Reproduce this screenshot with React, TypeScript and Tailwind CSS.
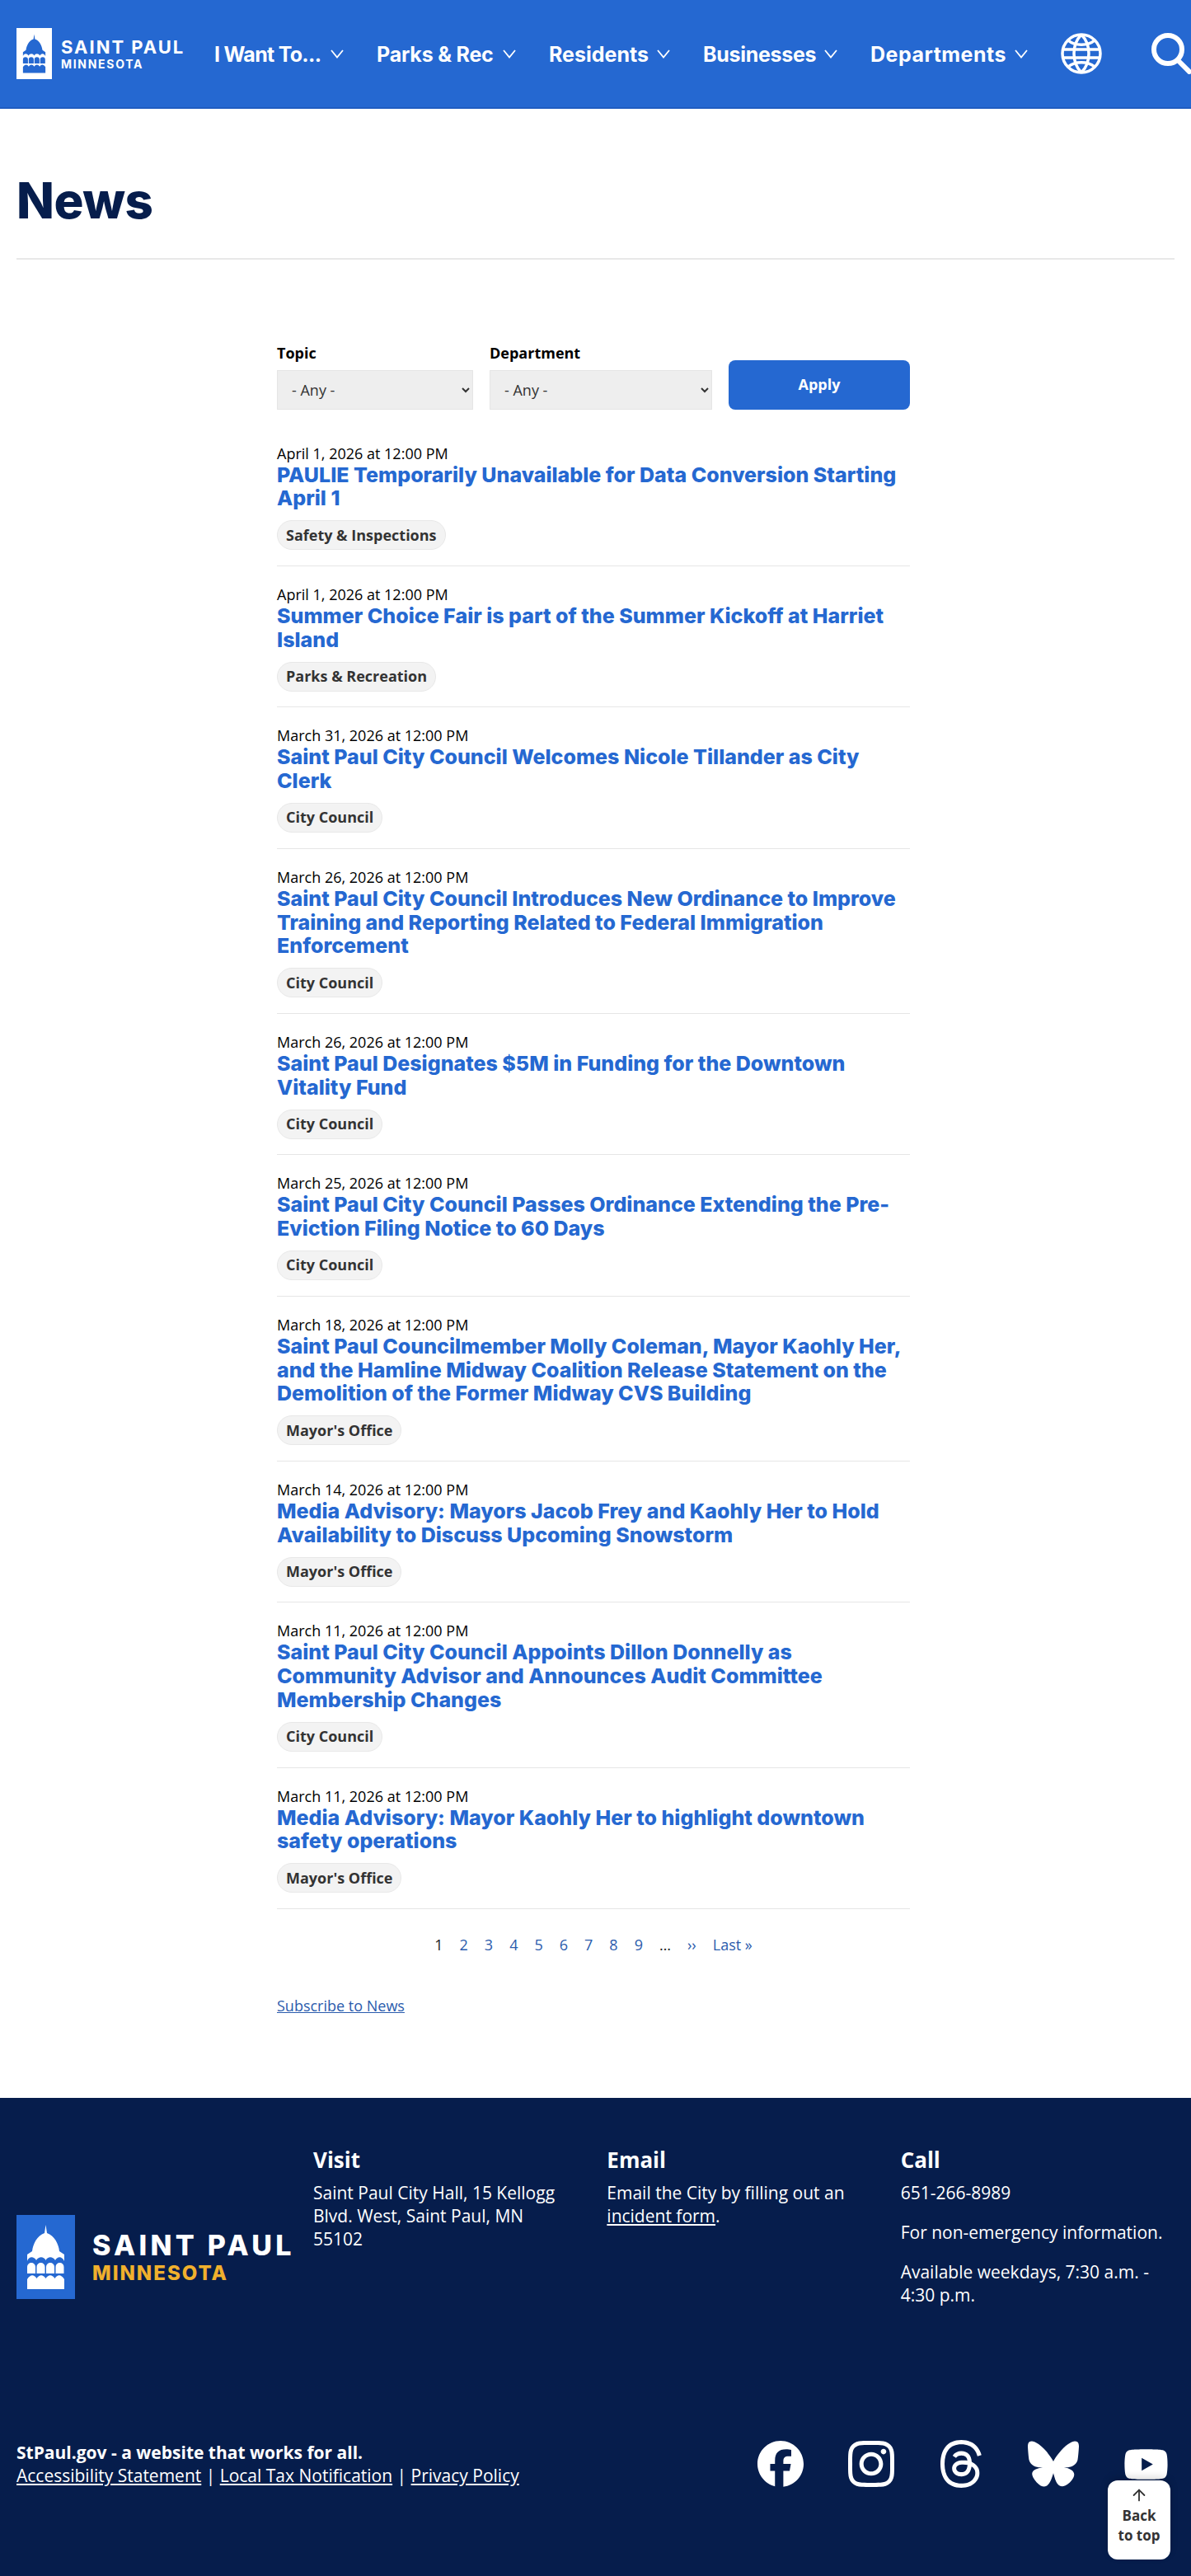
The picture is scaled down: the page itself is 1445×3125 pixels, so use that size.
import { ArrowUp } from "lucide-react";
import { FaBluesky, FaFacebook, FaInstagram, FaThreads, FaYoutube } from "react-icons/fa6";

const navItems = [
  { label: "I Want To...", text: "w-[131px] tracking-[-0.7px]" },
  { label: "Parks & Rec", text: "w-[143px] tracking-[-0.2px]" },
  { label: "Residents", text: "w-[121px] tracking-[0px]" },
  { label: "Businesses", text: "w-[137px] tracking-[-0.3px]" },
  { label: "Departments", text: "w-[165px] tracking-[0.5px]" },
];

const newsItems = [
  { date: "April 1, 2026 at 12:00 PM", title: "PAULIE Temporarily Unavailable for Data Conversion Starting April 1", tag: "Safety & Inspections" },
  { date: "April 1, 2026 at 12:00 PM", title: "Summer Choice Fair is part of the Summer Kickoff at Harriet Island", tag: "Parks & Recreation" },
  { date: "March 31, 2026 at 12:00 PM", title: "Saint Paul City Council Welcomes Nicole Tillander as City Clerk", tag: "City Council" },
  { date: "March 26, 2026 at 12:00 PM", title: "Saint Paul City Council Introduces New Ordinance to Improve Training and Reporting Related to Federal Immigration Enforcement", tag: "City Council" },
  { date: "March 26, 2026 at 12:00 PM", title: "Saint Paul Designates $5M in Funding for the Downtown Vitality Fund", tag: "City Council" },
  { date: "March 25, 2026 at 12:00 PM", title: "Saint Paul City Council Passes Ordinance Extending the Pre-Eviction Filing Notice to 60 Days", tag: "City Council" },
  { date: "March 18, 2026 at 12:00 PM", title: "Saint Paul Councilmember Molly Coleman, Mayor Kaohly Her, and the Hamline Midway Coalition Release Statement on the Demolition of the Former Midway CVS Building", tag: "Mayor's Office" },
  { date: "March 14, 2026 at 12:00 PM", title: "Media Advisory: Mayors Jacob Frey and Kaohly Her to Hold Availability to Discuss Upcoming Snowstorm", tag: "Mayor's Office" },
  { date: "March 11, 2026 at 12:00 PM", title: "Saint Paul City Council Appoints Dillon Donnelly as Community Advisor and Announces Audit Committee Membership Changes", tag: "City Council" },
  { date: "March 11, 2026 at 12:00 PM", title: "Media Advisory: Mayor Kaohly Her to highlight downtown safety operations", tag: "Mayor's Office" },
];

function CapitolMark({ className }: { className: string }) {
  return (
    <svg className={className} viewBox="0 0 71 102" fill="currentColor" aria-hidden="true">
      <path d="M35.5 12 L37 22 C46 25 51 35 52 44 L58 48 L58 56 C55 50 50 50 47 55 C44 50 38 50 35.5 55 C33 50 27 50 24 55 C21 50 15 50 13 56 L13 48 L19 44 C20 35 25 25 34 22 Z" />
      <path d="M13 71 V63 a5 5 0 0 1 10 0 V71 Z M24.5 71 V63 a5 5 0 0 1 10 0 V71 Z M36 71 V63 a5 5 0 0 1 10 0 V71 Z M47.5 71 V63 a5 5 0 0 1 10 0 V71 Z" />
      <path d="M13 78 C17 72 21 72 24.5 77 C28 72 32 72 35.5 77 C39 72 43 72 46.5 77 C50 72 54 72 58 78 V90 H13 Z" />
    </svg>
  );
}

function NavChevron() {
  return (
    <svg className="h-[11px] w-4 shrink-0" viewBox="0 0 16 11" fill="none" stroke="currentColor" strokeWidth="1.8" aria-hidden="true">
      <path d="M1 1 L8 9.5 L15 1" />
    </svg>
  );
}

function GlobeIcon() {
  return (
    <svg className="h-[50px] w-[50px] shrink-0" viewBox="0 0 50 50" fill="none" stroke="currentColor" strokeWidth="3.5" aria-hidden="true">
      <circle cx="25" cy="25" r="23" />
      <path d="M3 20 H47 M3 30 H47" />
      <path d="M9 9 C17 16 33 16 41 9" />
      <path d="M9 41 C17 34 33 34 41 41" />
      <path d="M25 2 C13 14 13 36 25 48" />
      <path d="M25 2 C37 14 37 36 25 48" />
    </svg>
  );
}

function SearchIcon() {
  return (
    <svg className="h-[50px] w-[50px] shrink-0" viewBox="0 0 50 50" fill="none" stroke="currentColor" strokeWidth="6" aria-hidden="true">
      <circle cx="20" cy="20" r="17" />
      <path d="M32 33 L48 49" />
    </svg>
  );
}

function Header() {
  return (
    <header className="flex h-[132px] items-center overflow-hidden border-b-2 border-[#1f5cc0] bg-[#2568d1] pl-5 text-white">
      <div className="flex h-[62px] w-[43px] shrink-0 items-center justify-center bg-white text-[#2568d1]">
        <CapitolMark className="h-[62px] w-[43px]" />
      </div>
      <div className="ml-[11px] w-[186px] shrink-0 pt-[1px] font-['Inter',sans-serif] font-bold">
        <div className="text-[22px] leading-[24px] tracking-[2px]">SAINT PAUL</div>
        <div className="text-[14px] leading-[18px] tracking-[1.7px]">MINNESOTA</div>
      </div>
      <nav className="flex shrink-0 items-center gap-[40px]">
        {navItems.map((item) => (
          <a key={item.label} className="flex items-center gap-[10px] font-['Inter',sans-serif] text-[25px] font-bold">
            <span className={`${item.text} whitespace-nowrap pt-[3px]`}>{item.label}</span>
            <NavChevron />
          </a>
        ))}
      </nav>
      <div className="ml-[40px] flex shrink-0 items-center gap-[60px]">
        <GlobeIcon />
        <SearchIcon />
      </div>
    </header>
  );
}

function FilterSelect({ label, className }: { label: string; className: string }) {
  return (
    <label className={className}>
      <span className="mb-[9px] block text-[18px] font-bold leading-[24px] text-black">{label}</span>
      <select className="h-[48px] w-full border border-[#e5e5e5] bg-[#eeeeee] pl-[13px] text-[18px] text-[#333333]">
        <option>- Any -</option>
      </select>
    </label>
  );
}

function NewsRow({ date, title, tag }: { date: string; title: string; tag: string }) {
  return (
    <article className="border-b border-[#e6e6e6] pb-[18.8px] pt-[22px]">
      <p className="text-[18px] leading-[24px] text-black">{date}</p>
      <h2 className="font-['Inter',sans-serif] text-[25px] font-extrabold leading-[28.8px] text-[#2568d1]">{title}</h2>
      <span className="mt-[12px] inline-flex h-9 items-center rounded-full border border-[#e8e8e8] bg-[#f3f3f3] px-[10px] text-[18px] font-bold text-[#333333]">
        {tag}
      </span>
    </article>
  );
}

function Pagination() {
  return (
    <div className="mt-[31px] flex h-6 items-center justify-center gap-[20px] text-[18px] leading-[24px] text-[#2b5cad]">
      <span className="text-[#222222]">1</span>
      {[2, 3, 4, 5, 6, 7, 8, 9].map((n) => (
        <a key={n}>{n}</a>
      ))}
      <span className="text-[#222222]">…</span>
      <a>››</a>
      <a>Last »</a>
    </div>
  );
}

function Footer() {
  return (
    <footer className="relative h-[580px] bg-[#061d4c] px-5 pt-[59px] text-white">
      <div className="flex h-[357px] items-start">
        <div className="mt-[83px] flex w-[360px] shrink-0 items-center">
          <div className="flex h-[102px] w-[71px] shrink-0 items-center justify-center bg-[#2568d1]">
            <CapitolMark className="h-[102px] w-[71px]" />
          </div>
          <div className="ml-[21px] whitespace-nowrap font-['Inter',sans-serif] font-extrabold">
            <div className="text-[34px] leading-[40px] tracking-[4.3px]">SAINT PAUL</div>
            <div className="text-[24px] leading-[28px] tracking-[2px] text-[#f0b02d]">MINNESOTA</div>
          </div>
        </div>
        <div className="grid w-[1045px] grid-cols-3 gap-6 text-[21px] leading-[28px]">
          <div>
            <h3 className="mb-[10px] text-[26px] font-bold leading-[32px]">Visit</h3>
            <p className="max-w-[310px]">Saint Paul City Hall, 15 Kellogg Blvd. West, Saint Paul, MN 55102</p>
          </div>
          <div>
            <h3 className="mb-[10px] text-[26px] font-bold leading-[32px]">Email</h3>
            <p>
              Email the City by filling out an <a className="underline">incident form</a>.
            </p>
          </div>
          <div>
            <h3 className="mb-[10px] text-[26px] font-bold leading-[32px]">Call</h3>
            <p className="mb-5">651-266-8989</p>
            <p className="mb-5">For non-emergency information.</p>
            <p>Available weekdays, 7:30 a.m. - 4:30 p.m.</p>
          </div>
        </div>
      </div>
      <div className="flex items-start justify-between">
        <div className="text-[21px] leading-[28px]">
          <p className="font-bold">StPaul.gov - a website that works for all.</p>
          <p>
            <a className="underline">Accessibility Statement</a> | <a className="underline">Local Tax Notification</a> |{" "}
            <a className="underline">Privacy Policy</a>
          </p>
        </div>
        <div className="mr-[7px] flex h-[56px] items-center gap-[54px]">
          <FaFacebook className="h-[56px] w-[56px]" />
          <FaInstagram className="h-[64px] w-[56px]" />
          <FaThreads className="h-[62px] w-[54px]" />
          <FaBluesky className="h-[56px] w-[62px]" />
          <FaYoutube className="h-[49px] w-[55px]" />
        </div>
      </div>
      <a className="absolute bottom-[20px] right-[25px] flex h-[96px] w-[76px] flex-col items-center rounded-xl bg-white pt-[7px] text-center text-[17px] font-bold leading-[24px] text-[#333333] shadow-[0_-4px_10px_rgba(0,0,0,0.15)]">
        <ArrowUp size={22} strokeWidth={2} className="mb-[2px] shrink-0" />
        Back
        <br />
        to top
      </a>
    </footer>
  );
}

export default function App() {
  return (
    <div className="min-h-[3125px] overflow-hidden bg-white font-['Open_Sans',sans-serif]">
      <Header />
      <main className="h-[2413px] px-5">
        <div className="flex h-[183px] items-center border-b-2 border-[#e8e8e8] pt-[40px]">
          <h1 className="font-['Inter',sans-serif] text-[60px] font-extrabold leading-[72px] tracking-[-0.5px] text-[#061d4c]">News</h1>
        </div>
        <div className="ml-[316px] w-[768px] pt-[101px]">
          <form className="flex items-end">
            <FilterSelect label="Topic" className="w-[238px]" />
            <FilterSelect label="Department" className="ml-[20px] w-[270px]" />
            <button type="button" className="ml-5 h-[60px] w-[220px] rounded-lg bg-[#2568d1] pb-[2px] text-[18px] font-bold text-white">
              Apply
            </button>
          </form>
          <div className="mt-[18.6px]">
            {newsItems.map((item) => (
              <NewsRow key={item.title} {...item} />
            ))}
          </div>
          <Pagination />
          <a className="mt-[50px] block w-fit text-[18px] leading-[24px] text-[#2b5cad] underline">Subscribe to News</a>
        </div>
      </main>
      <Footer />
    </div>
  );
}
